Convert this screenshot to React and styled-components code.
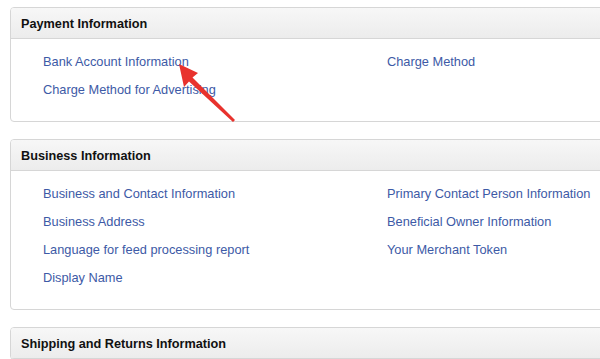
import React from 'react';
import styled, { createGlobalStyle } from 'styled-components';

const GlobalStyle = createGlobalStyle`
  html, body {
    margin: 0;
    padding: 0;
    background: #ffffff;
    overflow: hidden;
  }
  body {
    font-family: "Liberation Sans", Arial, sans-serif;
  }
`;

const sections = [
  {
    title: 'Payment Information',
    left: ['Bank Account Information', 'Charge Method for Advertising'],
    right: ['Charge Method'],
  },
  {
    title: 'Business Information',
    left: [
      'Business and Contact Information',
      'Business Address',
      'Language for feed processing report',
      'Display Name',
    ],
    right: [
      'Primary Contact Person Information',
      'Beneficial Owner Information',
      'Your Merchant Token',
    ],
  },
  {
    title: 'Shipping and Returns Information',
    left: [],
    right: [],
  },
];

const App = () => {
  return (
    <>
      <GlobalStyle />
      <Page>
        {sections.map((s) => (
          <Panel key={s.title}>
            <PanelHeader>{s.title}</PanelHeader>
            {s.left.length > 0 && (
              <PanelBody>
                <Column>
                  {s.left.map((l) => (
                    <LinkItem key={l} href="#">{l}</LinkItem>
                  ))}
                </Column>
                <Column>
                  {s.right.map((l) => (
                    <LinkItem key={l} href="#">{l}</LinkItem>
                  ))}
                </Column>
              </PanelBody>
            )}
          </Panel>
        ))}
        <Arrow width="70" height="70" viewBox="0 0 70 70">
          <polygon
            points="0,0 19,9 13.5,13.5 56,56 54,58 10,17.5 5,23"
            fill="#e8322d"
          />
        </Arrow>
      </Page>
    </>
  );
};

const Page = styled.div`
  position: relative;
  display: flex;
  flex-direction: column;
  gap: 17px;
  padding: 7px 0 0 10px;
  width: 620px;
`;

const Panel = styled.section`
  border: 1px solid #d6d6d6;
  border-radius: 4px;
  background: #ffffff;
  overflow: hidden;
`;

const PanelHeader = styled.div`
  height: 30px;
  line-height: 32px;
  padding-left: 10px;
  background: linear-gradient(#f7f7f7, #ececec);
  border-bottom: 1px solid #d6d6d6;
  font-size: 12.7px;
  font-weight: bold;
  color: #111111;
`;

const PanelBody = styled.div`
  display: grid;
  grid-template-columns: 344px 1fr;
  padding: 8px 0 18px 32px;
`;

const Column = styled.div`
  display: flex;
  flex-direction: column;
`;

const LinkItem = styled.a`
  height: 28px;
  line-height: 29px;
  font-size: 12.8px;
  color: #3d5aa6;
  text-decoration: none;
`;

const Arrow = styled.svg`
  position: absolute;
  left: 179px;
  top: 64px;
`;

export default App;
